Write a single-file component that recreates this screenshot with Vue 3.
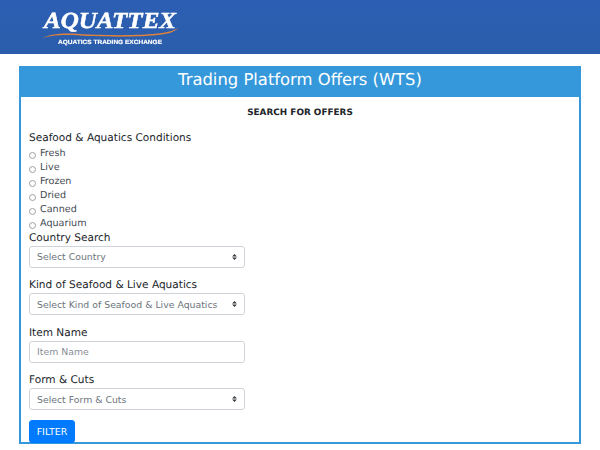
<script setup>
const conditions = ["Fresh", "Live", "Frozen", "Dried", "Canned", "Aquarium"];
const selects = {
  country: "Select Country",
  kind: "Select Kind of Seafood & Live Aquatics",
  form: "Select Form & Cuts"
};
</script>

<template>
  <div class="page">
    <header class="topbar">
      <svg class="logo" width="150" height="48" viewBox="0 0 150 48">
        <text class="logo-name" x="4" y="22" textLength="132" lengthAdjust="spacingAndGlyphs">AQUATTEX</text>
        <path d="M1 32.5 C 8 29, 18 27, 32 27.5 C 60 29.5, 100 30, 122 27 C 130 26, 134 24, 138 22 C 135 25.5, 130 27.5, 122 28.5 C 100 31.5, 60 31, 32 29 C 18 28.5, 8 30, 1 32.5 Z" fill="#e0813a" />
        <text class="logo-sub" x="18" y="37.5" textLength="104" lengthAdjust="spacingAndGlyphs">AQUATICS TRADING EXCHANGE</text>
      </svg>
    </header>

    <main class="card">
      <h1 class="card-title">Trading Platform Offers (WTS)</h1>
      <form class="card-body" @submit.prevent>
        <h2 class="search-title">SEARCH FOR OFFERS</h2>

        <p class="label first">Seafood &amp; Aquatics Conditions</p>
        <label v-for="c in conditions" :key="c" class="radio-row">
          <input type="radio" name="condition" />
          <span>{{ c }}</span>
        </label>

        <div class="group tight">
          <label class="label">Country Search</label>
          <select class="control select"><option>{{ selects.country }}</option></select>
        </div>
        <div class="group">
          <label class="label">Kind of Seafood &amp; Live Aquatics</label>
          <select class="control select"><option>{{ selects.kind }}</option></select>
        </div>
        <div class="group">
          <label class="label">Item Name</label>
          <input class="control" type="text" placeholder="Item Name" />
        </div>
        <div class="group">
          <label class="label">Form &amp; Cuts</label>
          <select class="control select"><option>{{ selects.form }}</option></select>
        </div>

        <button class="filter" type="submit">FILTER</button>
      </form>
    </main>
  </div>
</template>

<style>
html, body {
  margin: 0;
  background: #fff;
}
</style>

<style scoped>
.page {
  width: 600px;
  height: 450px;
  overflow: hidden;
  font-family: "DejaVu Sans", sans-serif;
  text-rendering: geometricPrecision;
  color: #212529;
}

.topbar {
  height: 54px;
  box-sizing: border-box;
  padding: 6px 0 0 40px;
  background: linear-gradient(180deg, #2c5fb3, #2a5daa);
}

.logo {
  display: block;
  filter: blur(0.35px);
}

.logo-name {
  font-family: "Liberation Serif", serif;
  font-weight: 700;
  font-style: italic;
  font-size: 23px;
  fill: #fff;
  stroke: #fff;
  stroke-width: 0.5px;
}

.logo-sub {
  font-family: "Liberation Sans", sans-serif;
  font-weight: 700;
  font-size: 6px;
  fill: #fff;
  stroke: #fff;
  stroke-width: 0.15px;
}

.card {
  margin: 12px 19px 0;
  height: 378px;
  box-sizing: border-box;
  border: 2px solid #3498db;
}

.card-title {
  margin: 0;
  height: 29px;
  line-height: 23px;
  background: #3498db;
  color: #fff;
  font-size: 16.4px;
  font-weight: 400;
  text-align: center;
}

.card-body {
  padding: 0 8px;
}

.search-title {
  margin: 0;
  padding-top: 10px;
  height: 14px;
  line-height: 13px;
  font-size: 8.9px;
  font-weight: 700;
  text-align: center;
}

.label {
  display: block;
  margin: 0;
  font-size: 10.55px;
  line-height: 14px;
  height: 14px;
}

.label.first {
  margin: 10px 0 2px;
}

.radio-row {
  display: flex;
  align-items: flex-start;
  height: 14px;
  font-size: 9.6px;
  line-height: 14px;
  color: #444b52;
}

.radio-row input {
  width: 7px;
  height: 7px;
  margin: 5px 4px 0 0;
  opacity: 0.7;
}

.group {
  margin-top: 10.5px;
}

.group.tight {
  margin-top: -0.1px;
}

.control {
  display: block;
  box-sizing: border-box;
  width: 216px;
  height: 22px;
  margin-top: 1px;
  padding: 0 7px;
  font-family: inherit;
  font-size: 9.33px;
  color: #6c757d;
  background: #fff;
  border: 1px solid #ced4da;
  border-radius: 3px;
  outline: none;
}

.control::placeholder {
  color: #868e96;
}

.select {
  appearance: none;
  background: #fff url("data:image/svg+xml,%3csvg xmlns='http://www.w3.org/2000/svg' viewBox='0 0 4 5'%3e%3cpath fill='%23343a40' d='M2 0L0 2h4zm0 5L0 3h4z'/%3e%3c/svg%3e") no-repeat right 7px center / 5px 6px;
}

.filter {
  display: block;
  margin-top: 10px;
  width: 46px;
  height: 23px;
  padding: 0 0 1px;
  font-family: inherit;
  font-size: 9.5px;
  color: #fff;
  background: #007bff;
  border: 1px solid #007bff;
  border-radius: 3px;
}
</style>
